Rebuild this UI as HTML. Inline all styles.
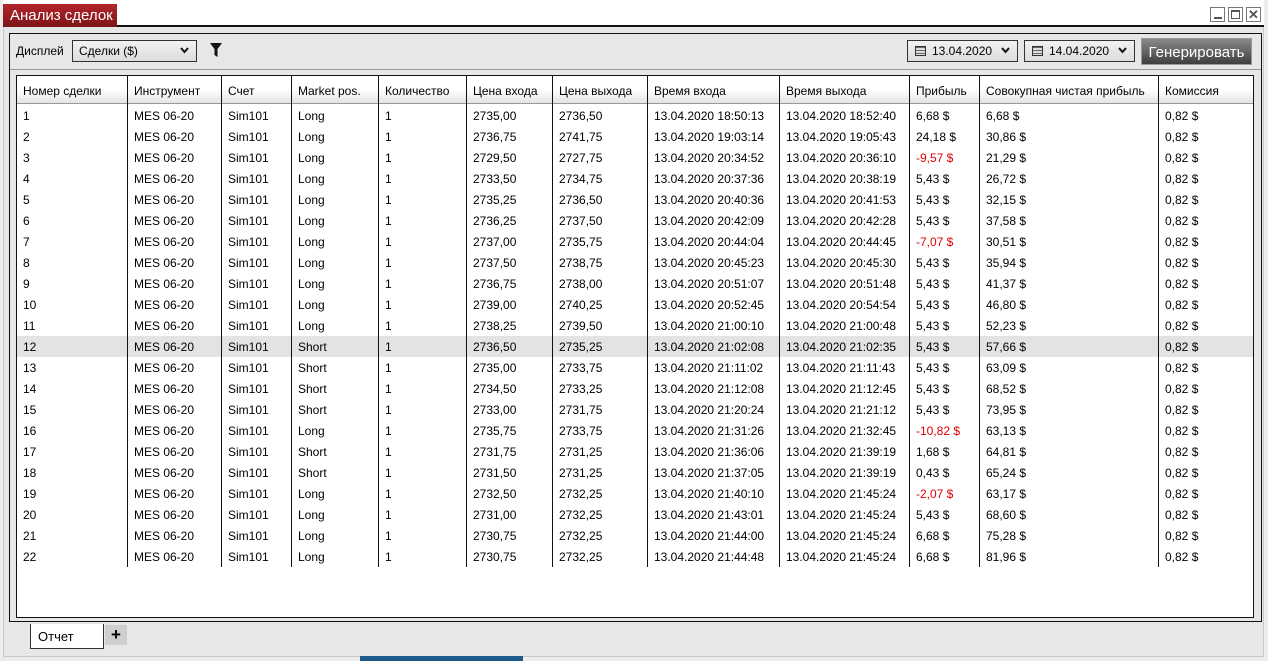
<!DOCTYPE html>
<html><head><meta charset="utf-8">
<style>
*{margin:0;padding:0;box-sizing:border-box}
body{width:1268px;height:661px;background:#ececec;font-family:"Liberation Sans",Arial,sans-serif;font-size:12px;color:#000;position:relative;overflow:hidden}
.abs{position:absolute}
#win{left:3px;top:0;width:1261px;height:657px;background:#e6e7e8;border:1px solid #c8c8c8}
#titlebar{left:3px;top:0;width:1261px;height:27px;background:#fff;border-bottom:2px solid #111}
#tab{left:3px;top:4px;width:114px;height:23px;background:linear-gradient(#b3262b,#7d1418);color:#fff;font-size:15px;padding:3px 0 0 7px}
.wb{top:7px;width:15px;height:15px;border:1px solid #777;background:#fff}
#frame{left:9px;top:33px;width:1253px;height:589px;border:1px solid #111;background:#e6e7e8}
#toolbar{left:10px;top:34px;width:1251px;height:36px;border-bottom:1px solid #999}
.sel{height:22px;border:1px solid #333;background:linear-gradient(#f2f2f2,#dcdcdc);font-size:12px;padding:3px 6px}
.chev{position:absolute;right:7px;top:6px}
#gen{left:1141px;top:38px;width:111px;height:27px;background:linear-gradient(#8a8a8a,#3e3e3e);color:#fff;font-size:15px;text-align:center;line-height:27px;border:1px solid #999}
#table{left:16px;top:75px;width:1238px;height:543px;border:1px solid #111;background:#fff;overflow:hidden}
.hdr{position:absolute;left:0;top:0;width:1236px;height:28px;background:linear-gradient(#fff 50%,#e4e4e4);border-bottom:1px solid #999}
.c{position:absolute;white-space:nowrap;padding-left:6px}
.vl{position:absolute;width:1px;background:#111;top:0}
.red{color:#e00000}
#bottomtab{left:30px;top:624px;width:74px;height:25px;background:#fff;border:1px solid #333;border-top:none;font-size:13px;padding:5px 0 0 7px}
#plus{left:105px;top:625px;width:22px;height:20px;background:#cfcfcf;font-size:17px;font-weight:bold;text-align:center;line-height:19px}
</style></head><body>
<div id="win" class="abs"></div>
<div class="abs" style="left:360px;top:656px;width:163px;height:5px;background:#1d5b8c"></div>
<div id="titlebar" class="abs"></div>
<div id="tab" class="abs">Анализ сделок</div>
<div class="abs wb" style="left:1210px"><div class="abs" style="left:3px;top:9px;width:8px;height:2px;background:#555"></div></div>
<div class="abs wb" style="left:1228px"><div class="abs" style="left:2px;top:2px;width:9px;height:9px;border:1px solid #555;border-top-width:2px"></div></div>
<div class="abs wb" style="left:1246px;font-size:13px;font-weight:bold;color:#555;text-align:center;line-height:13px">✕</div>
<div id="frame" class="abs"></div>
<div id="toolbar" class="abs"></div>
<div class="abs" style="left:16px;top:44px">Дисплей</div>
<div class="abs sel" style="left:72px;top:40px;width:125px">Сделки ($)<svg class="chev" width="9" height="7"><path d="M1 1L4.5 5L8 1" stroke="#111" stroke-width="2" fill="none"/></svg></div>
<svg class="abs" style="left:210px;top:42px" width="12" height="16"><path d="M0 1H12L7.5 7V15L4.5 13V7Z" fill="#111"/></svg>
<div class="abs sel" style="left:907px;top:40px;width:111px;font-size:12px;padding-left:24px">13.04.2020<svg class="chev" width="9" height="7"><path d="M1 1L4.5 5L8 1" stroke="#111" stroke-width="2" fill="none"/></svg><span class="abs" style="left:7px;top:5px;width:11px;height:10px;border:1px solid #333;background:repeating-linear-gradient(#666 0 1px,#ddd 1px 3px)"></span></div>
<div class="abs sel" style="left:1024px;top:40px;width:111px;font-size:12px;padding-left:24px">14.04.2020<svg class="chev" width="9" height="7"><path d="M1 1L4.5 5L8 1" stroke="#111" stroke-width="2" fill="none"/></svg><span class="abs" style="left:7px;top:5px;width:11px;height:10px;border:1px solid #333;background:repeating-linear-gradient(#666 0 1px,#ddd 1px 3px)"></span></div>
<div id="gen" class="abs">Генерировать</div>
<div id="table" class="abs">
<div class="hdr"></div>
<div class="abs" style="left:0;top:260px;width:1236px;height:21px;background:#e3e3e3"></div>
<div id="grid"></div>
</div>
<div id="bottomtab" class="abs">Отчет</div>
<div id="plus" class="abs">+</div>
<script>
var cols=[0,111,205,275,362,450,536,631,763,893,963,1142];
var hdr=["Номер сделки","Инструмент","Счет","Market pos.","Количество","Цена входа","Цена выхода","Время входа","Время выхода","Прибыль","Совокупная чистая прибыль","Комиссия"];
var d=[
["MES 06-20","Long","2735,00","2736,50","18:50:13","18:52:40","6,68 $","6,68 $"],
["MES 06-20","Long","2736,75","2741,75","19:03:14","19:05:43","24,18 $","30,86 $"],
["MES 06-20","Long","2729,50","2727,75","20:34:52","20:36:10","-9,57 $","21,29 $"],
["MES 06-20","Long","2733,50","2734,75","20:37:36","20:38:19","5,43 $","26,72 $"],
["MES 06-20","Long","2735,25","2736,50","20:40:36","20:41:53","5,43 $","32,15 $"],
["MES 06-20","Long","2736,25","2737,50","20:42:09","20:42:28","5,43 $","37,58 $"],
["MES 06-20","Long","2737,00","2735,75","20:44:04","20:44:45","-7,07 $","30,51 $"],
["MES 06-20","Long","2737,50","2738,75","20:45:23","20:45:30","5,43 $","35,94 $"],
["MES 06-20","Long","2736,75","2738,00","20:51:07","20:51:48","5,43 $","41,37 $"],
["MES 06-20","Long","2739,00","2740,25","20:52:45","20:54:54","5,43 $","46,80 $"],
["MES 06-20","Long","2738,25","2739,50","21:00:10","21:00:48","5,43 $","52,23 $"],
["MES 06-20","Short","2736,50","2735,25","21:02:08","21:02:35","5,43 $","57,66 $"],
["MES 06-20","Short","2735,00","2733,75","21:11:02","21:11:43","5,43 $","63,09 $"],
["MES 06-20","Short","2734,50","2733,25","21:12:08","21:12:45","5,43 $","68,52 $"],
["MES 06-20","Short","2733,00","2731,75","21:20:24","21:21:12","5,43 $","73,95 $"],
["MES 06-20","Long","2735,75","2733,75","21:31:26","21:32:45","-10,82 $","63,13 $"],
["MES 06-20","Short","2731,75","2731,25","21:36:06","21:39:19","1,68 $","64,81 $"],
["MES 06-20","Short","2731,50","2731,25","21:37:05","21:39:19","0,43 $","65,24 $"],
["MES 06-20","Long","2732,50","2732,25","21:40:10","21:45:24","-2,07 $","63,17 $"],
["MES 06-20","Long","2731,00","2732,25","21:43:01","21:45:24","5,43 $","68,60 $"],
["MES 06-20","Long","2730,75","2732,25","21:44:00","21:45:24","6,68 $","75,28 $"],
["MES 06-20","Long","2730,75","2732,25","21:44:48","21:45:24","6,68 $","81,96 $"]];
var h="";
for(var i=1;i<cols.length;i++)h+='<div class="vl" style="left:'+(cols[i]-1)+'px;height:'+(29+21*22)+'px"></div>';
for(var i=0;i<hdr.length;i++)h+='<div class="c" style="left:'+cols[i]+'px;top:8px">'+hdr[i]+'</div>';
for(var r=0;r<d.length;r++){var x=d[r],t=33+21*r;
var v=[r+1,x[0],"Sim101",x[1],"1",x[2],x[3],"13.04.2020 "+x[4],"13.04.2020 "+x[5],x[6],x[7],"0,82 $"];
for(var i=0;i<v.length;i++)h+='<div class="c'+(i==9&&(""+v[i])[0]=="-"?" red":"")+'" style="left:'+cols[i]+'px;top:'+t+'px">'+v[i]+'</div>';}
document.getElementById("grid").innerHTML=h;
</script>
</body></html>
